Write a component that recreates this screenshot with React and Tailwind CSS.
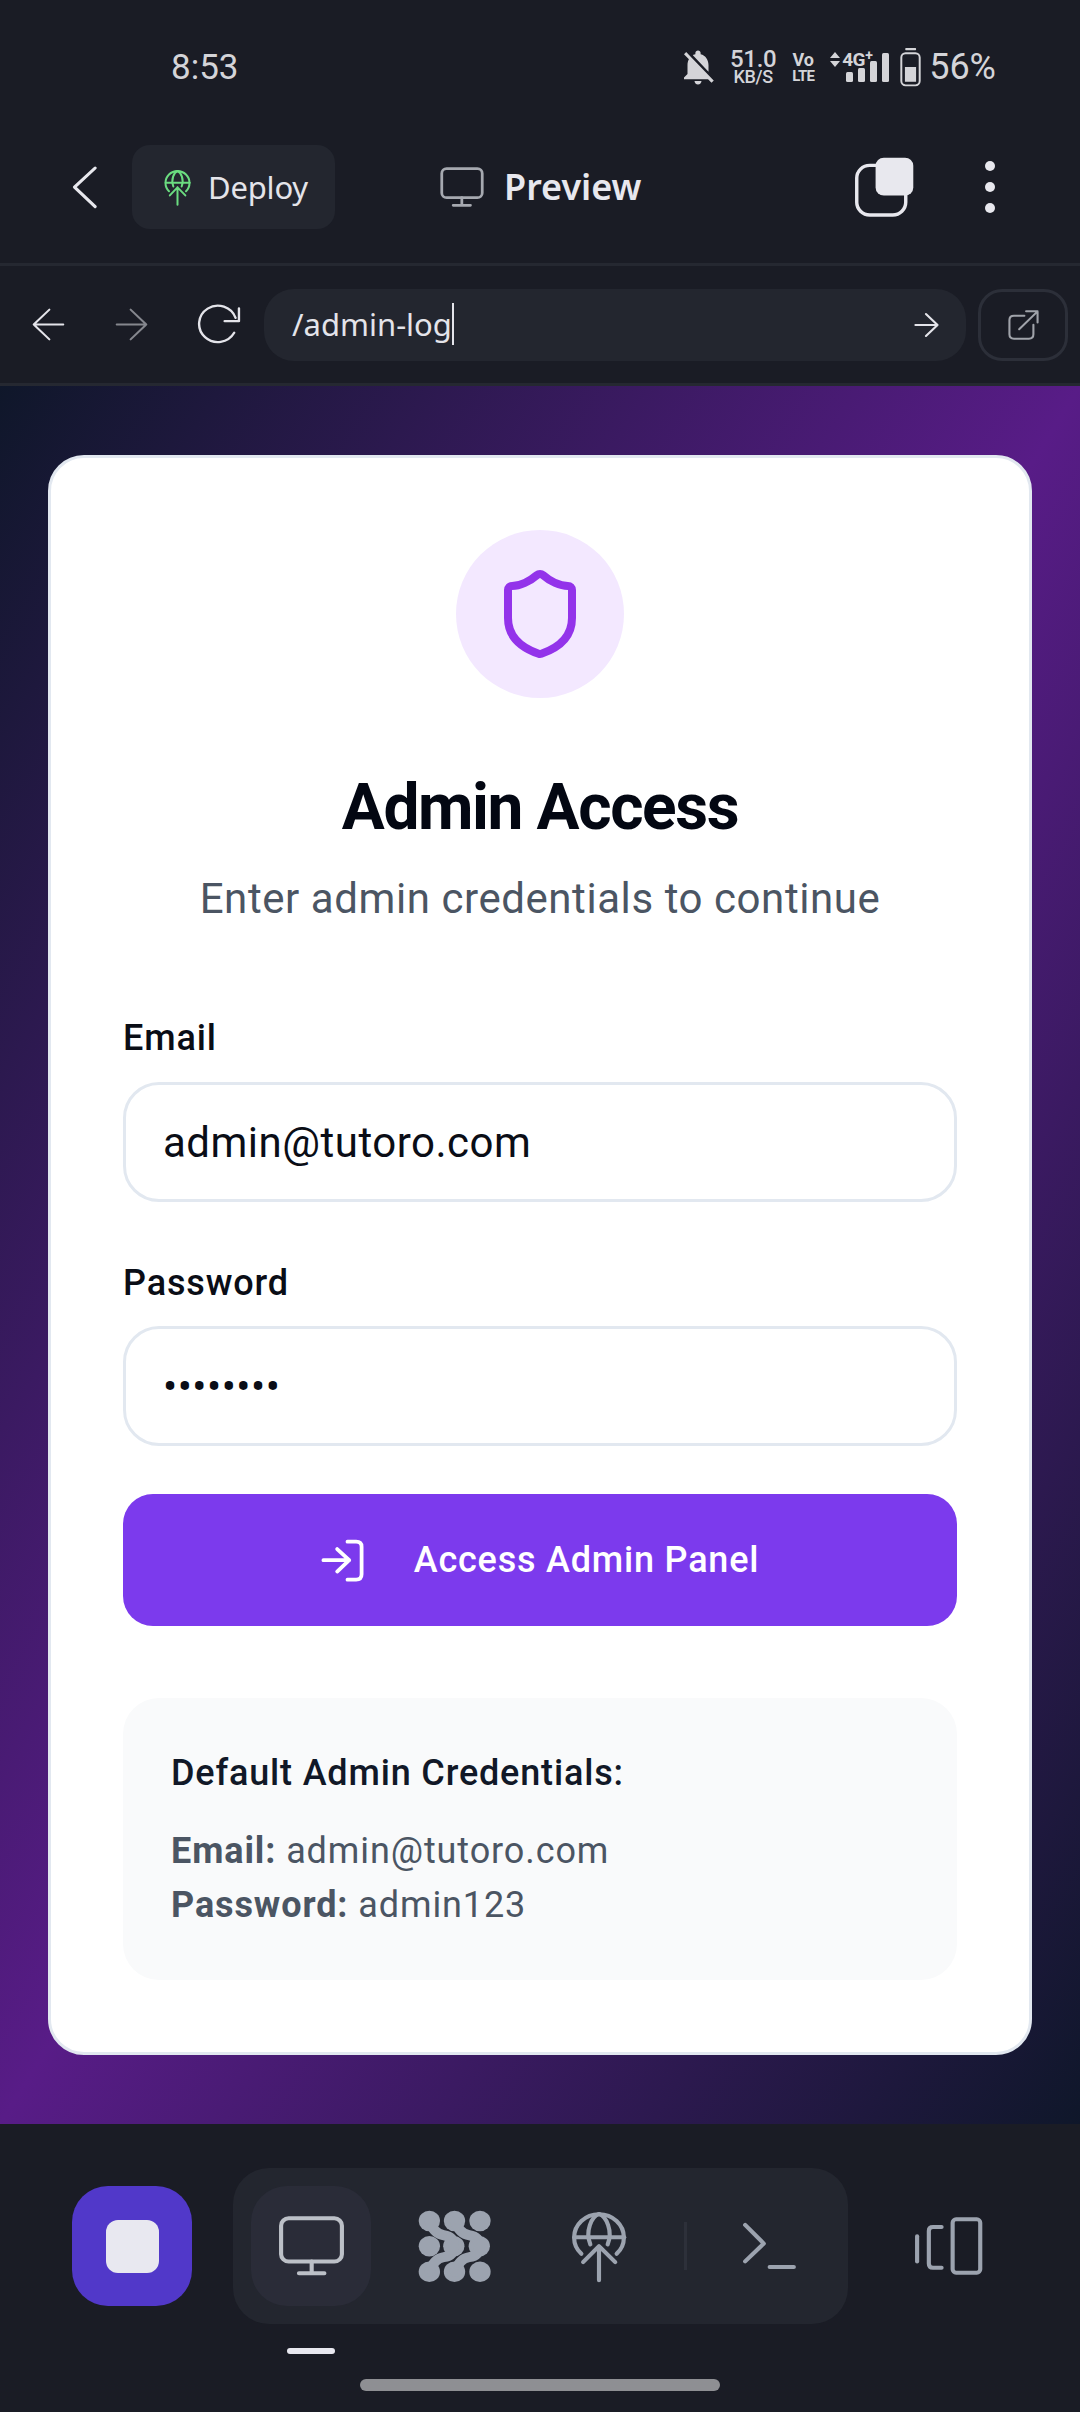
import React from "react";
import { MdNotificationsOff } from "react-icons/md";

const Ic = ({ vb, w, h, sw, color, children, fill = "none" }) => (
  <svg viewBox={vb} width={w} height={h} preserveAspectRatio="none" fill={fill} stroke={color} strokeWidth={sw} strokeLinecap="round" strokeLinejoin="round" className="shrink-0 block">
    {children}
  </svg>
);

const DeployGlobe = ({ w, h, color }) => (
  <Ic vb="90 328 162 220" w={w} h={h} sw={12} color={color}>
    <path d="M120 460 A72 70 0 1 1 222 460" />
    <path d="M100 410 H244" />
    <path d="M146 432 C130 390 150 348 171 340 C192 348 212 390 196 432" />
    <path d="M171 540 V437 M125 485 L171 437 L218 485" />
  </Ic>
);

const MonitorBig = () => (
  <Ic vb="805 345 195 185" w={67} h={62} sw={12} color="#bcc0c7">
    <rect x="814" y="355" width="177" height="129" rx="22" />
    <path d="M903 484 V519 M866 519 H940" />
  </Ic>
);

const NetworkLogo = () => (
  <svg viewBox="1215 328 212 220" width={73} height={73} preserveAspectRatio="none" className="block shrink-0" fill="#9ca3af">
    {[1248, 1321, 1395].map((x) =>
      [361, 514].map((y) => <circle key={x + "-" + y} cx={x} cy={y} r="31" />)
    )}
    <circle cx="1248" cy="437" r="31" />
    <circle cx="1319" cy="437" r="31" />
    <circle cx="1393" cy="437" r="31" />
    <g fill="none" stroke="#9ca3af" strokeWidth="30" strokeLinecap="round">
      <path d="M1248 361 Q1262 400 1290 404 Q1319 408 1319 437 Q1319 466 1290 470 Q1262 474 1248 514" />
      <path d="M1322 361 Q1336 400 1364 404 Q1393 408 1393 437 Q1393 466 1364 470 Q1336 474 1322 514" />
    </g>
  </svg>
);

const TopBar = () => (
  <div className="flex h-[134px] items-center justify-between pl-[171px] pr-[84px] font-['Roboto',sans-serif] text-[#d4d4d8]">
    <span className="text-[35px] leading-none">8:53</span>
    <div className="flex items-center">
      <MdNotificationsOff size={42} color="#d4d4d8" className="shrink-0" />
      <div className="ml-[12px] flex w-[44px] flex-col items-center font-medium leading-none">
        <span className="text-[24px] leading-[20px] tracking-[-0.3px]">51.0</span>
        <span className="text-[18px] leading-[16px] tracking-[-0.3px]">KB/S</span>
      </div>
      <div className="ml-[17px] flex w-[22px] flex-col items-center font-bold leading-none">
        <span className="text-[18px] leading-[18px]">Vo</span>
        <span className="text-[15px] leading-[14px] tracking-[-0.8px]">LTE</span>
      </div>
      <div className="relative ml-[16px] h-[32px] w-[60px]">
        <svg viewBox="0 0 60 32" width={60} height={32} className="block">
          <path d="M0 7 L5 1 L10 7Z M0 10 L5 16 L10 10Z" fill="#d4d4d8" />
          <rect x="16" y="21" width="7" height="10" rx="1.5" fill="#d4d4d8" />
          <rect x="28" y="17" width="7" height="14" rx="1.5" fill="#d4d4d8" />
          <rect x="40" y="10" width="7" height="21" rx="1.5" fill="#d4d4d8" />
          <rect x="52" y="2" width="7" height="29" rx="1.5" fill="#d4d4d8" />
        </svg>
        <span className="absolute left-[12px] top-[0px] text-[19px] font-bold leading-[18px] tracking-[-0.6px]">4G</span>
        <span className="absolute left-[35px] top-[-3px] text-[14px] font-bold leading-[14px]">+</span>
      </div>
      <svg viewBox="1050 145 64 120" width={21} height={40} className="ml-[10px] block shrink-0">
        <rect x="1066" y="147" width="33" height="7" rx="2" fill="#d4d4d8" />
        <rect x="1054" y="163" width="56" height="98" rx="13" fill="none" stroke="#d4d4d8" strokeWidth="6" />
        <rect x="1065" y="205" width="34" height="45" fill="#d4d4d8" />
      </svg>
      <span className="ml-[8px] text-[36px] leading-none">56%</span>
    </div>
  </div>
);

const Header = () => (
  <div className="flex h-[129px] items-start pt-[11px]">
    <div className="flex h-[84px] items-center pl-[71px]">
      <Ic vb="205 495 80 134" w={28} h={45} sw={9} color="#e8e8ee">
        <path d="M274 504 L215 561 L274 619" />
      </Ic>
    </div>
    <div className="ml-[33px] flex h-[84px] w-[203px] items-center rounded-[18px] bg-[#23262f] pl-[32px]">
      <DeployGlobe w={27} h={37} color="#6bdc80" />
      <span className="ml-[17px] text-[31px] leading-none tracking-[-0.2px] text-[#e4e4ea]">Deploy</span>
    </div>
    <div className="ml-[104px] flex h-[84px] items-center">
      <Ic vb="1275 498 133 125" w={46} h={42} sw={8} color="#a6a9b0">
        <rect x="1283" y="506" width="117" height="86" rx="14" />
        <path d="M1341 592 V615 M1316 615 H1366" />
      </Ic>
      <span className="ml-[19px] text-[36px] font-semibold leading-none text-[#e8e8ee]">Preview</span>
    </div>
    <div className="ml-auto flex h-[84px] items-center pr-[85px]">
      <svg viewBox="912 465 178 185" width={61} height={62} preserveAspectRatio="none" className="block shrink-0">
        <rect x="920" y="493" width="143" height="148" rx="38" fill="none" stroke="#e8e8ee" strokeWidth="10" />
        <rect x="975" y="470" width="110" height="113" rx="24" fill="#e8e8ee" />
      </svg>
      <div className="ml-[70px] flex flex-col gap-[11px]">
        <span className="block h-[10px] w-[10px] rounded-full bg-[#e8e8ee]" />
        <span className="block h-[10px] w-[10px] rounded-full bg-[#e8e8ee]" />
        <span className="block h-[10px] w-[10px] rounded-full bg-[#e8e8ee]" />
      </div>
    </div>
  </div>
);

const UrlBar = () => (
  <div className="flex h-[123px] items-center border-y-[3px] border-[#252831] pl-[32px]">
    <Ic vb="92 925 95 100" w={33} h={33} sw={6} color="#e4e4ea">
      <path d="M182 975 H97 M142 930 L97 975 L142 1020" />
    </Ic>
    <div className="ml-[50px]">
      <Ic vb="335 925 95 100" w={33} h={33} sw={6} color="#85878e">
        <path d="M340 975 H425 M380 930 L425 975 L380 1020" />
      </Ic>
    </div>
    <div className="ml-[47px]">
      <Ic vb="565 910 135 130" w={46} h={43} sw={7} color="#e4e4ea">
        <path d="M680 1000 A55 55 0 1 1 684 955" />
        <path d="M694 926 V965 H652" />
      </Ic>
    </div>
    <div className="ml-[23px] flex h-[72px] w-[702px] items-center rounded-[30px] bg-[#23262f] pl-[28px] pr-[26px]">
      <span className="relative text-[31px] leading-none text-[#e4e4ea]">/admin-log<span className="absolute right-[-2px] top-[-6px] h-[42px] w-[2px] bg-[#e4e4ea]" /></span>
      <div className="ml-auto">
        <Ic vb="1088 936 74 78" w={26} h={26} sw={6} color="#e4e4ea">
          <path d="M1092 975 H1155 M1122 942 L1155 975 L1122 1008" />
        </Ic>
      </div>
    </div>
    <div className="ml-[12px] flex h-[72px] w-[90px] items-center justify-center rounded-[24px] border-[3px] border-[#2c2f39]">
      <Ic vb="1355 928 95 95" w={33} h={32} sw={6} color="#a0a3aa">
        <path d="M1405 948 H1375 Q1362 948 1362 961 V1003 Q1362 1016 1375 1016 H1418 Q1431 1016 1431 1003 V975" />
        <path d="M1390 988 L1443 935 M1410 935 H1443 V968" />
      </Ic>
    </div>
  </div>
);

const inputCls = "block h-[120px] w-full rounded-[36px] border-[3px] border-[#e2e8f0] bg-white px-[37px] text-[42px] tracking-[0.5px] text-[#0a0d16] outline-none";

const Card = () => (
  <div className="flex flex-col rounded-[36px] border-[3px] border-[#e2e8f0] bg-white p-[72px]">
    <div className="mx-auto flex h-[168px] w-[168px] items-center justify-center rounded-full bg-[#f3e8ff]">
      <svg viewBox="0 0 24 24" width={96} height={96} fill="none" stroke="#9333ea" strokeWidth="2" strokeLinecap="round" strokeLinejoin="round" className="block">
        <path d="M20 13c0 5-3.5 7.5-7.66 8.95a1 1 0 0 1-.67-.01C7.5 20.5 4 18 4 13V6a1 1 0 0 1 1-1c2 0 4.5-1.2 6.24-2.72a1.17 1.17 0 0 1 1.52 0C14.51 3.81 17 5 19 5a1 1 0 0 1 1 1z" />
      </svg>
    </div>
    <h1 className="mt-[68px] text-center text-[64px] font-bold leading-[84px] tracking-[-1.4px] text-[#030712]">Admin Access</h1>
    <p className="mt-[22px] text-center text-[42px] leading-[54px] tracking-[0.57px] text-[#4b5563]">Enter admin credentials to continue</p>
    <label className="mt-[85px] block text-[36px] font-medium leading-[54px] tracking-[0.85px] text-[#0a0d16]">Email</label>
    <div className="mt-[17px]"><input className={inputCls} readOnly value="admin@tutoro.com" /></div>
    <label className="mt-[54px] block text-[36px] font-medium leading-[54px] tracking-[0.85px] text-[#0a0d16]">Password</label>
    <div className="mt-[16px]"><input className={inputCls} readOnly type="password" value="admin123" /></div>
    <button className="mt-[48px] flex h-[132px] w-full items-center justify-center rounded-[30px] bg-[#7c3aed] text-[36px] font-medium tracking-[0.8px] text-white">
      <Ic vb="118 235 125 128" w={43} h={43} sw={11} color="#ffffff">
        <path d="M195 243 H220 Q236 243 236 258 V340 Q236 356 220 356 H195" />
        <path d="M125 298 H200 M165 265 L200 298 L165 332" />
      </Ic>
      <span className="ml-[50px]">Access Admin Panel</span>
    </button>
    <div className="mt-[72px] rounded-[36px] bg-[#f9fafb] p-[48px]">
      <h3 className="text-[36px] font-medium leading-[54px] tracking-[0.83px] text-[#111827]">Default Admin Credentials:</h3>
      <div className="mt-[24px] text-[36px] leading-[54px] tracking-[0.9px] text-[#4b5563]">
        <p><strong className="font-bold">Email:</strong> admin@tutoro.com</p>
        <p><strong className="font-bold">Password:</strong> admin123</p>
      </div>
    </div>
  </div>
);

const BottomBar = () => (
  <div className="flex h-[288px] flex-col">
    <div className="mt-[44px] flex h-[156px] items-center pl-[72px]">
      <div className="flex h-[120px] w-[120px] items-center justify-center rounded-[36px] bg-[#5138c9]">
        <div className="h-[53px] w-[53px] rounded-[12px] bg-[#e8e8f0]" />
      </div>
      <div className="ml-[41px] flex h-[156px] w-[615px] items-center rounded-[36px] bg-[#23262f] pl-[18px]">
        <div className="flex h-[120px] w-[120px] items-center justify-center rounded-[36px] bg-[#2a2c38]">
          <MonitorBig />
        </div>
        <div className="ml-[47px]"><NetworkLogo /></div>
        <div className="ml-[80px]"><DeployGlobe w={56} h={73} color="#9ca3af" /></div>
        <div className="ml-[57px] h-[48px] w-[3px] bg-[#2d303a]" />
        <div className="ml-[54px]">
          <Ic vb="585 365 165 145" w={57} h={48} sw={12} color="#9ca3af">
            <path d="M597 374 L651 430 L597 484 M668 501 H738" />
          </Ic>
        </div>
      </div>
      <div className="ml-[66px]">
        <Ic vb="1085 350 200 175" w={69} h={58} sw={12} color="#9ca3af">
          <path d="M1094 408 V484" />
          <path d="M1165 380 H1140 Q1128 380 1128 392 V490 Q1128 503 1140 503 H1165" />
          <rect x="1197" y="357" width="80" height="161" rx="10" />
        </Ic>
      </div>
    </div>
    <div className="ml-[287px] mt-[24px] h-[6px] w-[48px] rounded-full bg-[#e8e8f0]" />
    <div className="ml-[360px] mt-[25px] h-[12px] w-[360px] rounded-full bg-[#8e8f93]" />
  </div>
);

export default function App() {
  return (
    <div className="flex h-[2412px] w-[1080px] flex-col overflow-hidden bg-[#1a1c25] font-['Roboto',sans-serif]">
      <div className="font-['Noto_Sans','Roboto',sans-serif]">
        <TopBar />
        <Header />
        <UrlBar />
      </div>
      <main className="flex flex-1 flex-col justify-center bg-linear-to-br/srgb from-[#0f172a] via-[#581c87] to-[#0f172a] px-[48px]">
        <Card />
      </main>
      <BottomBar />
    </div>
  );
}
